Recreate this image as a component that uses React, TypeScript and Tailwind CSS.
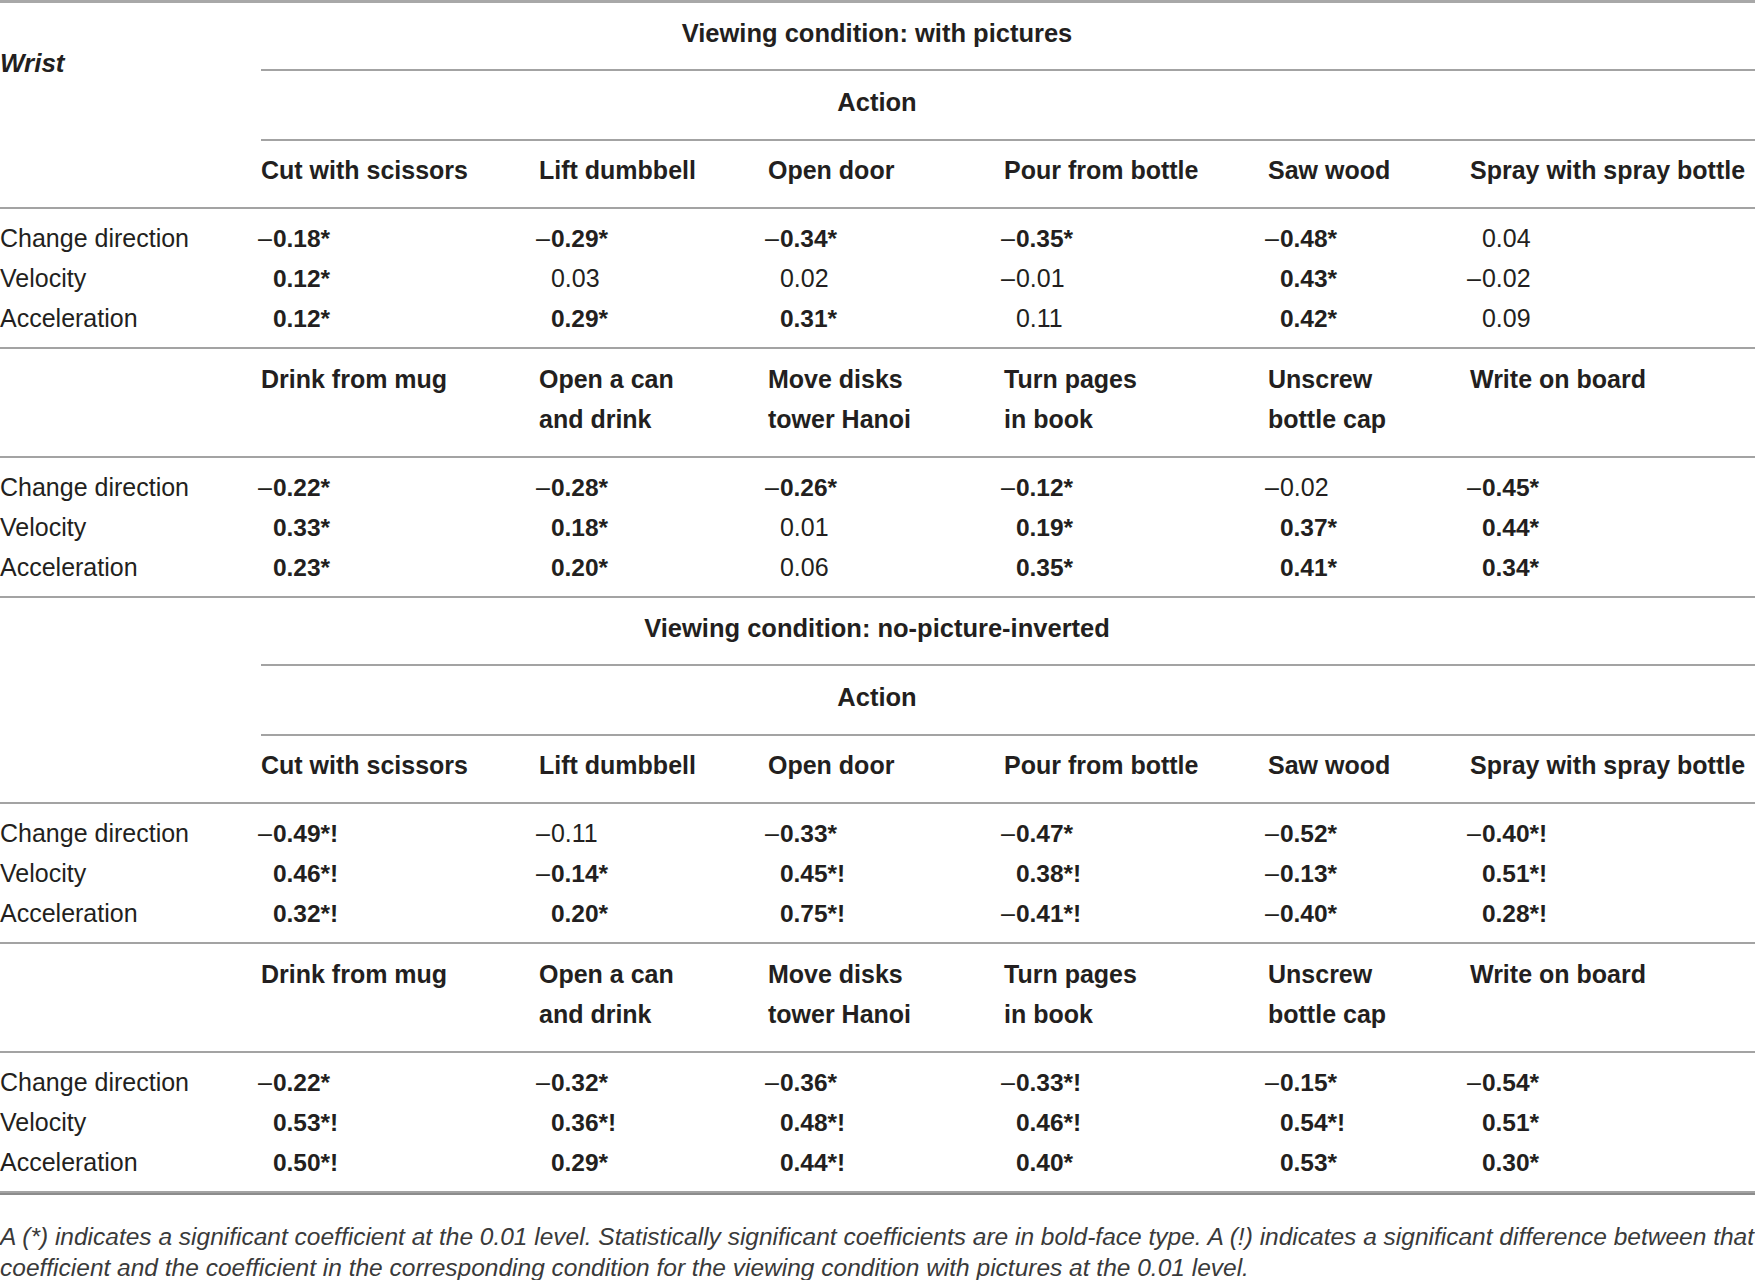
type Cell = { t: string; b?: boolean };

const COLS = "grid grid-cols-[261px_278px_229px_236px_264px_202px_285px]";
const LINE = "border-b-2 border-[#a3a3a3]";

const rowLabels = ["Change direction", "Velocity", "Acceleration"];

const headA = [
  ["Cut with scissors"],
  ["Lift dumbbell"],
  ["Open door"],
  ["Pour from bottle"],
  ["Saw wood"],
  ["Spray with spray bottle"],
];

const headB = [
  ["Drink from mug"],
  ["Open a can", "and drink"],
  ["Move disks", "tower Hanoi"],
  ["Turn pages", "in book"],
  ["Unscrew", "bottle cap"],
  ["Write on board"],
];

// b = bold (significant)
const withPicsA: Cell[][] = [
  [{ t: "-0.18*", b: true }, { t: "-0.29*", b: true }, { t: "-0.34*", b: true }, { t: "-0.35*", b: true }, { t: "-0.48*", b: true }, { t: "0.04" }],
  [{ t: "0.12*", b: true }, { t: "0.03" }, { t: "0.02" }, { t: "-0.01" }, { t: "0.43*", b: true }, { t: "-0.02" }],
  [{ t: "0.12*", b: true }, { t: "0.29*", b: true }, { t: "0.31*", b: true }, { t: "0.11" }, { t: "0.42*", b: true }, { t: "0.09" }],
];

const withPicsB: Cell[][] = [
  [{ t: "-0.22*", b: true }, { t: "-0.28*", b: true }, { t: "-0.26*", b: true }, { t: "-0.12*", b: true }, { t: "-0.02" }, { t: "-0.45*", b: true }],
  [{ t: "0.33*", b: true }, { t: "0.18*", b: true }, { t: "0.01" }, { t: "0.19*", b: true }, { t: "0.37*", b: true }, { t: "0.44*", b: true }],
  [{ t: "0.23*", b: true }, { t: "0.20*", b: true }, { t: "0.06" }, { t: "0.35*", b: true }, { t: "0.41*", b: true }, { t: "0.34*", b: true }],
];

const invertedA: Cell[][] = [
  [{ t: "-0.49*!", b: true }, { t: "-0.11" }, { t: "-0.33*", b: true }, { t: "-0.47*", b: true }, { t: "-0.52*", b: true }, { t: "-0.40*!", b: true }],
  [{ t: "0.46*!", b: true }, { t: "-0.14*", b: true }, { t: "0.45*!", b: true }, { t: "0.38*!", b: true }, { t: "-0.13*", b: true }, { t: "0.51*!", b: true }],
  [{ t: "0.32*!", b: true }, { t: "0.20*", b: true }, { t: "0.75*!", b: true }, { t: "-0.41*!", b: true }, { t: "-0.40*", b: true }, { t: "0.28*!", b: true }],
];

const invertedB: Cell[][] = [
  [{ t: "-0.22*", b: true }, { t: "-0.32*", b: true }, { t: "-0.36*", b: true }, { t: "-0.33*!", b: true }, { t: "-0.15*", b: true }, { t: "-0.54*", b: true }],
  [{ t: "0.53*!", b: true }, { t: "0.36*!", b: true }, { t: "0.48*!", b: true }, { t: "0.46*!", b: true }, { t: "0.54*!", b: true }, { t: "0.51*", b: true }],
  [{ t: "0.50*!", b: true }, { t: "0.29*", b: true }, { t: "0.44*!", b: true }, { t: "0.40*", b: true }, { t: "0.53*", b: true }, { t: "0.30*", b: true }],
];

function Value({ cell }: { cell: Cell }) {
  const neg = cell.t.startsWith("-");
  const num = neg ? cell.t.slice(1) : cell.t;
  return (
    <span className="-ml-[3px] whitespace-nowrap leading-none">
      <span className={`mr-[1px] ${neg ? "" : "invisible"}`}>–</span>
      <span className={cell.b ? "text-[24.5px] font-bold" : ""}>{num}</span>
    </span>
  );
}

function ColumnHeads({ heads, tall }: { heads: string[][]; tall?: boolean }) {
  return (
    <div
      className={`${COLS} ${LINE} ${
        tall ? "h-[109px] pt-[10px]" : "h-[68px] pt-[9px]"
      } text-[25px] font-bold leading-[40px]`}
    >
      <div />
      {heads.map((h, i) => (
        <div key={i} className="whitespace-nowrap">
          {h.map((line) => (
            <div key={line}>{line}</div>
          ))}
        </div>
      ))}
    </div>
  );
}

function DataBlock({ rows }: { rows: Cell[][] }) {
  return (
    <div className={`${LINE} pt-[9px] pb-[9px] text-[25px] leading-[40px]`}>
      {rows.map((r, i) => (
        <div key={i} className={`${COLS} h-[40px]`}>
          <div className="whitespace-nowrap">{rowLabels[i]}</div>
          {r.map((c, j) => (
            <div key={j}>
              <Value cell={c} />
            </div>
          ))}
        </div>
      ))}
    </div>
  );
}

function ConditionHead({ title, label }: { title: string; label?: string }) {
  return (
    <div className="grid grid-cols-[261px_1fr]">
      <div className="pt-[44px] text-[26px] font-bold italic leading-[32px]">{label}</div>
      <div className="text-[25.5px] font-bold leading-[40px]">
        <div className={`h-[68px] ${LINE} pt-[10px] pr-[262px] text-center`}>{title}</div>
        <div className={`h-[70px] ${LINE} pt-[11px] pr-[262px] text-center`}>Action</div>
      </div>
    </div>
  );
}

export default function App() {
  return (
    <div
      className="w-[1755px] bg-white text-[#231f20]"
      style={{ fontFamily: '"Liberation Sans", Arial, sans-serif' }}
    >
      <div className="border-t-[3px] border-[#a8a8a8]">
        {/* Viewing condition: with pictures */}
        <ConditionHead title="Viewing condition: with pictures" label="Wrist" />
        <ColumnHeads heads={headA} />
        <DataBlock rows={withPicsA} />
        <ColumnHeads heads={headB} tall />
        <DataBlock rows={withPicsB} />

        {/* Viewing condition: no-picture-inverted */}
        <ConditionHead title="Viewing condition: no-picture-inverted" />
        <ColumnHeads heads={headA} />
        <DataBlock rows={invertedA} />
        <ColumnHeads heads={headB} tall />
        <div className="border-b-2 border-[#8c8c8c]">
          <DataBlock rows={invertedB} />
        </div>
      </div>

      {/* Footnote */}
      <div className="pt-[26px] pb-[4px] text-[24.5px] italic leading-[31px] text-[#3a3a3a]">
        <div className="whitespace-nowrap">
          A (*) indicates a significant coefficient at the 0.01 level. Statistically significant coefficients are in
          bold-face type. A (!) indicates a significant difference between that
        </div>
        <div className="whitespace-nowrap">
          coefficient and the coefficient in the corresponding condition for the viewing condition with pictures at the
          0.01 level.
        </div>
      </div>
    </div>
  );
}
